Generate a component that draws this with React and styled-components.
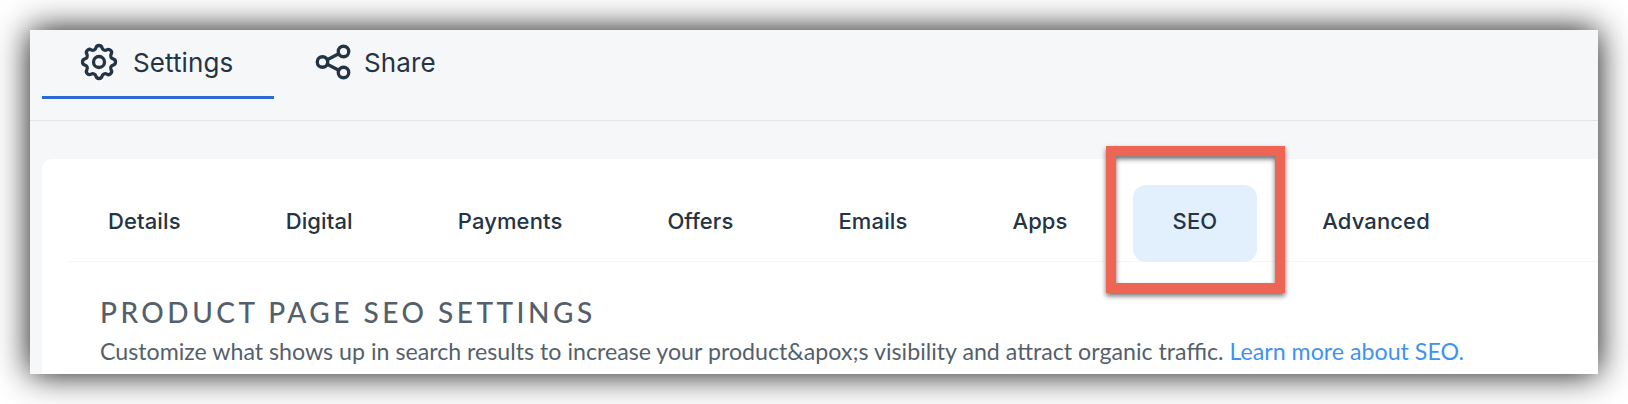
import React from "react";
import styled, { createGlobalStyle } from "styled-components";

const GlobalStyle = createGlobalStyle`
  html, body {
    margin: 0;
    background: #ffffff;
  }
  body {
    padding: 30px;
    overflow: hidden;
  }
`;

const Window = styled.div`
  width: 1568px;
  height: 344px;
  background: #f6f7f9;
  box-shadow: 0 0 32px rgba(0, 0, 0, 0.95);
  overflow: hidden;
  font-family: Inter, "Liberation Sans", sans-serif;
`;

const TopBar = styled.div`
  height: 90px;
  padding-left: 12px;
  border-bottom: 1px solid #e1e4e9;
  display: flex;
  gap: 16px;
`;

const TopTab = styled.div`
  width: ${(props) => props.$width}px;
  height: 69px;
  box-sizing: border-box;
  padding: 0 0 2px ${(props) => props.$pad}px;
  display: flex;
  align-items: center;
  gap: ${(props) => props.$gap}px;
  color: #243444;
  font-size: 26px;
  letter-spacing: 0.1px;
  border-bottom: 3px solid ${(props) => (props.$active ? "#2c69d4" : "transparent")};
`;

const Card = styled.div`
  margin: 38px 0 0 12px;
  height: 300px;
  background: #ffffff;
  border-radius: 10px 0 0 0;
`;

const TabRow = styled.div`
  height: 103px;
  margin-left: 26px;
  padding-top: 26px;
  box-sizing: border-box;
  display: flex;
  gap: 25px;
  border-bottom: 1px solid #f5f6f8;
`;

const Tab = styled.div`
  position: relative;
  height: 77px;
  padding: 0 40px 6px;
  box-sizing: border-box;
  display: flex;
  align-items: center;
  font-size: 22px;
  font-weight: 500;
  letter-spacing: 0.12px;
  color: #243444;
  border-radius: 13px;
  background: ${(props) => (props.$active ? "#e2effd" : "transparent")};
`;

const Callout = styled.div`
  position: absolute;
  left: -27px;
  right: -28px;
  top: -39px;
  bottom: -31px;
  border: 10px solid #ee6554;
  box-shadow: 0 3px 5px rgba(0, 0, 0, 0.55), inset 0 3px 5px rgba(0, 0, 0, 0.55);
`;

const Section = styled.div`
  padding: 34px 0 0 58px;
  font-family: Lato, "Noto Sans", sans-serif;
`;

const Heading = styled.h2`
  margin: 0;
  font-size: 28px;
  line-height: 32px;
  font-weight: 500;
  letter-spacing: 3.5px;
  color: #555f6b;
`;

const Description = styled.p`
  margin: 9px 0 0;
  font-size: 23.2px;
  line-height: 28px;
  color: #555f6b;
  white-space: nowrap;
`;

const LearnMore = styled.a`
  color: #3f92f0;
`;

const GearIcon = () => (
  <svg width="44" height="44" viewBox="0 0 24 24" fill="none" stroke="#243444" strokeWidth="1.8" strokeLinecap="round" strokeLinejoin="round">
    <path d="M10.325 4.317c.426 -1.756 2.924 -1.756 3.35 0a1.724 1.724 0 0 0 2.573 1.066c1.543 -.94 3.31 .826 2.37 2.37a1.724 1.724 0 0 0 1.065 2.572c1.756 .426 1.756 2.924 0 3.35a1.724 1.724 0 0 0 -1.066 2.573c.94 1.543 -.826 3.31 -2.37 2.37a1.724 1.724 0 0 0 -2.572 1.065c-.426 1.756 -2.924 1.756 -3.35 0a1.724 1.724 0 0 0 -2.573 -1.066c-1.543 .94 -3.31 -.826 -2.37 -2.37a1.724 1.724 0 0 0 -1.065 -2.572c-1.756 -.426 -1.756 -2.924 0 -3.35a1.724 1.724 0 0 0 1.066 -2.573c-.94 -1.543 .826 -3.31 2.37 -2.37c1 .608 2.296 .07 2.572 -1.065z" />
    <circle cx="12" cy="12" r="3" />
  </svg>
);

const ShareIcon = () => (
  <svg width="42" height="42" viewBox="0 0 24 24" fill="none" stroke="#243444" strokeWidth="1.9" strokeLinecap="round" strokeLinejoin="round">
    <circle cx="6" cy="12" r="3" />
    <circle cx="18" cy="6" r="3" />
    <circle cx="18" cy="18" r="3" />
    <path d="M8.7 10.7l6.6 -3.4" />
    <path d="M8.7 13.3l6.6 3.4" />
  </svg>
);

const TABS = ["Details", "Digital", "Payments", "Offers", "Emails", "Apps", "SEO", "Advanced"];

export default function App() {
  return (
    <Window>
      <GlobalStyle />
      <TopBar>
        <TopTab $active $width={232} $pad={35} $gap={12}>
          <GearIcon />
          Settings
        </TopTab>
        <TopTab $width={180} $pad={22} $gap={10}>
          <ShareIcon />
          Share
        </TopTab>
      </TopBar>
      <Card>
        <TabRow>
          {TABS.map((name) => (
            <Tab key={name} $active={name === "SEO"}>
              {name}
              {name === "SEO" && <Callout />}
            </Tab>
          ))}
        </TabRow>
        <Section>
          <Heading>PRODUCT PAGE SEO SETTINGS</Heading>
          <Description>
            Customize what shows up in search results to increase your product&amp;apox;s visibility and attract organic traffic.{" "}
            <LearnMore>Learn more about SEO.</LearnMore>
          </Description>
        </Section>
      </Card>
    </Window>
  );
}
